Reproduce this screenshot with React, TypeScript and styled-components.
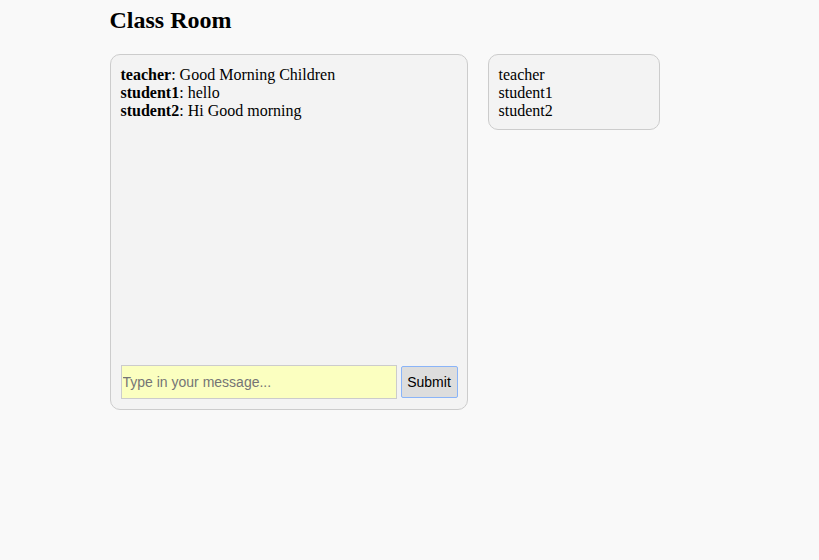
import styled, { createGlobalStyle } from 'styled-components';

const GlobalStyle = createGlobalStyle`
  body {
    margin: 0;
    background: #f9f9f9;
    font-family: "Liberation Serif", "Times New Roman", serif;
    font-size: 16px;
    color: #000;
  }
`;

type Message = {
  user: string
  text: string
}

const messages: Message[] = [
  { user: 'teacher', text: 'Good Morning Children' },
  { user: 'student1', text: 'hello' },
  { user: 'student2', text: 'Hi Good morning' },
];

const users = ['teacher', 'student1', 'student2'];

const App: React.FC = () => {
  return (
    <>
      <GlobalStyle />
      <Container>
        <Title>Class Room</Title>
        <Row>
          <ChatBox>
            <Messages>
              {messages.map((m, i) => (
                <Line key={i}>
                  <b>{m.user}</b>: {m.text}
                </Line>
              ))}
            </Messages>
            <Form onSubmit={(e) => e.preventDefault()}>
              <Input placeholder="Type in your message..." />
              <SubmitButton type="submit">Submit</SubmitButton>
            </Form>
          </ChatBox>
          <UserList>
            {users.map((u) => (
              <Line key={u}>{u}</Line>
            ))}
          </UserList>
        </Row>
      </Container>
    </>
  )
}

const Container = styled.div`
  width: 600px;
  margin: 0 auto;
  padding-top: 7px;
`;

const Title = styled.h2`
  font-size: 24px;
  line-height: 27px;
  font-weight: bold;
  margin: 0 0 20px;
`;

const Row = styled.div`
  display: flex;
  align-items: flex-start;
  gap: 20px;
`;

const Panel = styled.div`
  background: #f3f3f3;
  border: 1px solid #cccccc;
  border-radius: 10px;
  padding: 11px 10px 9px;
`;

const ChatBox = styled(Panel)`
  width: 336px;
  height: 334px;
  padding-bottom: 10px;
  padding-top: 10px;
  display: flex;
  flex-direction: column;
`;

const Messages = styled.div`
  flex: 1;
  padding-top: 1px;
`;

const Line = styled.div`
  line-height: 18px;
`;

const Form = styled.form`
  display: flex;
  align-items: center;
  gap: 4px;
  margin-right: -1px;
`;

const Input = styled.input`
  flex: 1;
  min-width: 0;
  height: 34px;
  box-sizing: border-box;
  padding: 0 1px;
  border: 1px solid #cccccc;
  background: #fbffc0;
  font-family: "Liberation Sans", Arial, sans-serif;
  font-size: 14px;
  outline: none;
  &::placeholder {
    color: #757575;
  }
`;

const SubmitButton = styled.button`
  height: 32px;
  width: 57px;
  box-sizing: border-box;
  border: 1px solid #8ab4f8;
  border-radius: 2px;
  background: #dddddd;
  color: #000;
  font-family: "Liberation Sans", Arial, sans-serif;
  font-size: 14px;
  padding: 0;
`;

const UserList = styled(Panel)`
  width: 150px;
`;

export default App;
